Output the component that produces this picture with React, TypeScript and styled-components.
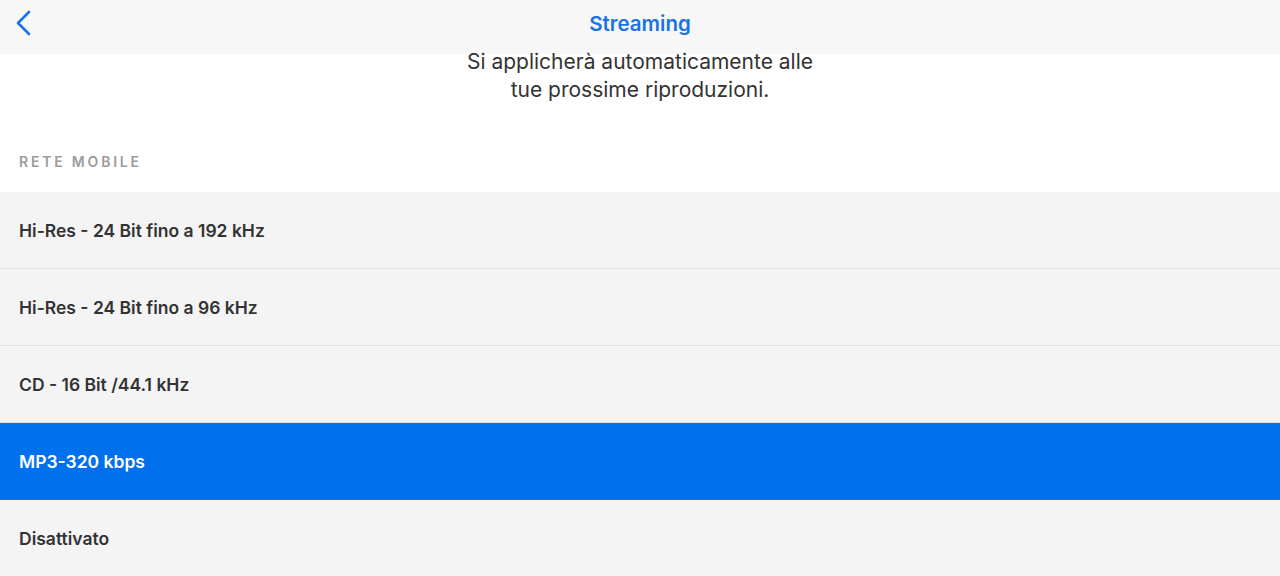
import React, { useState } from 'react'
import styled, { createGlobalStyle } from 'styled-components'

const GlobalStyle = createGlobalStyle`
  html, body {
    margin: 0;
    padding: 0;
    background: #fff;
    font-family: Inter, 'Open Sans', 'Noto Sans', sans-serif;
    -webkit-font-smoothing: antialiased;
  }
`

const Page = styled.div`
  width: 1280px;
  height: 576px;
  overflow: hidden;
  background: #fff;
`

const Header = styled.header`
  height: 54px;
  padding-bottom: 8px;
  box-sizing: border-box;
  background: #f7f7f7;
  display: grid;
  grid-template-columns: 60px 1fr 60px;
  align-items: center;
`

const Back = styled.button`
  border: 0;
  background: none;
  padding: 0 0 0 14px;
  display: flex;
  align-items: center;
  cursor: pointer;
`

const Title = styled.h1`
  margin: 0;
  text-align: center;
  font-size: 20.5px;
  font-weight: 600;
  color: #1a72e6;
`

const Intro = styled.p`
  margin: -6px auto 0;
  width: 372px;
  text-align: center;
  font-size: 21px;
  line-height: 28px;
  color: #333;
`

const SectionLabel = styled.h2`
  margin: 0;
  padding: 49px 19px 0;
  height: 88px;
  box-sizing: border-box;
  font-size: 14px;
  font-weight: 600;
  letter-spacing: 2.8px;
  color: #9b9b9b;
  text-transform: uppercase;
`

const List = styled.ul`
  list-style: none;
  margin: 0;
  padding: 0;
`

const Option = styled.li<{ $active: boolean }>`
  height: 76px;
  padding: 0 19px;
  display: flex;
  align-items: center;
  font-size: 17.5px;
  font-weight: 600;
  background: ${p => (p.$active ? '#0070ed' : '#f4f4f4')};
  color: ${p => (p.$active ? '#fff' : '#333')};
  border-bottom: 1px solid ${p => (p.$active ? '#0070ed' : '#e3e3e3')};
  cursor: pointer;

  &:last-child {
    border-bottom: 0;
  }
`

const options = [
  'Hi-Res - 24 Bit fino a 192 kHz',
  'Hi-Res - 24 Bit fino a 96 kHz',
  'CD - 16 Bit /44.1 kHz',
  'MP3-320 kbps',
  'Disattivato',
]

const App: React.FC = () => {
  const [selected, setSelected] = useState(3)

  return (
    <Page>
      <GlobalStyle />
      <Header>
        <Back aria-label="Indietro">
          <svg width="20" height="26" viewBox="0 0 20 26" fill="none">
            <path
              d="M15 2 L4 13 L15 24"
              stroke="#1a72e6"
              strokeWidth="2.6"
              strokeLinecap="round"
              strokeLinejoin="round"
            />
          </svg>
        </Back>
        <Title>Streaming</Title>
        <div />
      </Header>
      <Intro>Si applicherà automaticamente alle tue prossime riproduzioni.</Intro>
      <SectionLabel>Rete mobile</SectionLabel>
      <List>
        {options.map((label, i) => (
          <Option key={label} $active={i === selected} onClick={() => setSelected(i)}>
            {label}
          </Option>
        ))}
      </List>
    </Page>
  )
}

export default App
